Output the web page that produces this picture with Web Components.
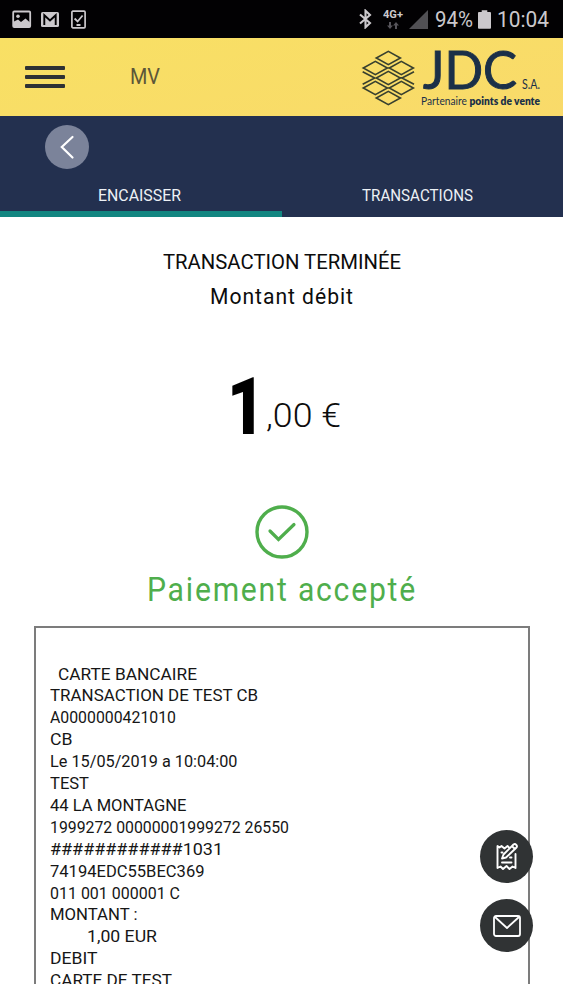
<!DOCTYPE html>
<html lang="fr">
<head>
<meta charset="utf-8">
<title>Transaction</title>
<style>
	html, body {
		margin: 0;
		height: 1000px;
		overflow: hidden;
		background: #fff;
		font-family: Roboto, "Liberation Sans", sans-serif;
	}
</style>
</head>
<body>
<payment-app></payment-app>

<script>
// Line of text squeezed or stretched to a given width
// <fit-text w="120">Hello</fit-text>
class FitText extends HTMLElement {
	constructor() {
		super();
		this.attachShadow({ mode: 'open' });
		this.shadowRoot.innerHTML = `
			<style>
				:host { display: block; flex: none; white-space: nowrap; }
				span { display: inline-block; transform-origin: 0 50%; }
			</style>
			<span><slot></slot></span>`;
	}

	connectedCallback() {
		const w = Number(this.getAttribute('w'));
		const span = this.shadowRoot.querySelector('span');
		this.style.width = w + 'px';
		span.style.transform = `scaleX(${w / span.getBoundingClientRect().width})`;
	}
}

class StatusBar extends HTMLElement {
	constructor() {
		super();
		this.attachShadow({ mode: 'open' });
		this.shadowRoot.innerHTML = `
			<style>
				:host {
					display: flex;
					align-items: center;
					justify-content: space-between;
					box-sizing: border-box;
					height: 37.5px;
					padding: 1px 14px 0 12px;
					background: #020103;
					color: #cbc8cc;
					font-size: 22px;
					line-height: 37px;
				}
				div { display: flex; align-items: center; }
				svg { display: block; flex: none; }
				.net { display: flex; flex-direction: column; align-items: center; margin: 0 6px 0 11px; gap: 2px; }
				.net fit-text { font-size: 10.5px; font-weight: 700; line-height: 10px; }
			</style>
			<div>
				<svg width="20" height="19" viewBox="0 0 20 19">
					<rect x="1.2" y="1.5" width="17" height="15.5" rx="1" fill="none" stroke="#cbc8cc" stroke-width="1.8"/>
					<circle cx="6" cy="6.3" r="1.8" fill="#cbc8cc"/>
					<path d="M2 11.5 6 9.5 9 12 13.5 8.5 18 12.5V17H2Z" fill="#cbc8cc"/>
				</svg>
				<svg width="18" height="15" viewBox="0 0 18 15" style="margin-left:9px">
					<rect width="18" height="15" rx="1.6" fill="#cbc8cc"/>
					<path d="M3.3 13V3.2L9 8.4l5.7-5.2V13" fill="none" stroke="#020103" stroke-width="1.9"/>
				</svg>
				<svg width="15" height="19" viewBox="0 0 15 19" style="margin-left:12px">
					<rect x=".9" y="1.2" width="13.2" height="16.6" rx="1" fill="none" stroke="#cbc8cc" stroke-width="1.7"/>
					<path d="M3.6 8.5 6.6 11.5 11.6 5.5M5.5 15h4" fill="none" stroke="#cbc8cc" stroke-width="1.8"/>
				</svg>
			</div>
			<div>
				<svg width="13" height="20" viewBox="0 0 13 20">
					<path d="M1 5.5 11 14 6.5 18.3V1.7L11 6 1 14.5" fill="none" stroke="#cbc8cc" stroke-width="2.1"/>
				</svg>
				<div class="net">
					<fit-text w="20">4G+</fit-text>
					<svg width="12" height="7" viewBox="0 0 12 7" fill="#56545a">
						<path d="M2 0H4V3.5H6L3 7 0 3.5H2ZM8 7H10V3.5H12L9 0 6 3.5H8Z"/>
					</svg>
				</div>
				<svg width="19" height="19" viewBox="0 0 19 19"><path d="M19 0V19H0Z" fill="#515054"/></svg>
				<fit-text w="38" style="margin-left:7px">94%</fit-text>
				<svg width="13" height="19" viewBox="0 0 14 20" style="margin:0 6px 0 5px">
					<path d="M4 0H10V2H13Q14 2 14 3V19Q14 20 13 20H1Q0 20 0 19V3Q0 2 1 2H4Z" fill="#cbc8cc"/>
				</svg>
				<fit-text w="52">10:04</fit-text>
			</div>`;
	}
}

class JdcLogo extends HTMLElement {
	constructor() {
		super();
		this.attachShadow({ mode: 'open' });
		// Seven diamonds in three columns
		const cells = [[91, 36], [52, 66], [130, 66], [91, 96], [52, 126], [130, 126], [91, 156]];
		const lattice = cells.map(([x, y]) =>
			`M${x - 36} ${y}L${x} ${y - 20}L${x + 36} ${y}L${x} ${y + 20}Z`
		).join('');
		this.shadowRoot.innerHTML = `
			<style>
				:host { display: flex; color: #1b3048; font-family: Lato, sans-serif; }
				svg { display: block; margin-right: 1px; }
				.name { display: flex; align-items: baseline; height: 48px; gap: 5px; }
				.jdc { margin-left: 2px; font-size: 51.5px; line-height: 46px; -webkit-text-stroke: 1px #1b3048; }
				.sa { font-size: 12.5px; }
				.tag { font-size: 11.2px; line-height: 14px; }
				b { font-weight: 800; }
			</style>
			<svg width="62" height="62" viewBox="0 0 186 186">
				<path d="${lattice}M14 77 50 96 14 115M168 77 132 96 168 115" fill="none" stroke="#38402f" stroke-width="5"/>
			</svg>
			<div>
				<div class="name"><fit-text class="jdc" w="94">JDC</fit-text><fit-text class="sa" w="18">S.A.</fit-text></div>
				<fit-text class="tag" w="119">Partenaire <b>points de vente</b></fit-text>
			</div>`;
	}
}

class AppHeader extends HTMLElement {
	constructor() {
		super();
		this.attachShadow({ mode: 'open' });
		this.shadowRoot.innerHTML = `
			<style>
				:host {
					display: flex;
					align-items: center;
					box-sizing: border-box;
					height: 78px;
					padding: 0 23px 0 25px;
					background: linear-gradient(165deg, #f8e064, #f9da6a);
				}
				.menu { display: grid; gap: 5px; width: 40px; margin-right: 65px; }
				.menu i { height: 4px; border-radius: 1px; background: #2d3134; }
				.user { color: #5d5638; font-size: 21.5px; }
				jdc-logo { margin-left: auto; }
			</style>
			<div class="menu"><i></i><i></i><i></i></div>
			<fit-text class="user" w="30">MV</fit-text>
			<jdc-logo></jdc-logo>`;
	}
}

class TabNav extends HTMLElement {
	constructor() {
		super();
		this.attachShadow({ mode: 'open' });
		this.shadowRoot.innerHTML = `
			<style>
				:host {
					display: flex;
					flex-direction: column;
					height: 101.5px;
					background: #23304f;
					color: #edf1f5;
				}
				.back { margin: 9.5px 0 0 45px; width: 44px; height: 44px; }
				.tabs { display: grid; grid-template-columns: 282px 281px; margin-top: auto; font-size: 16.2px; }
				.tab {
					display: flex;
					justify-content: center;
					height: 26px;
					line-height: 21px;
					border-bottom: 6px solid transparent;
				}
				.tab:first-child { border-color: #138681; padding-right: 3px; }
				.tab:last-child { padding-right: 10px; }
			</style>
			<svg class="back" viewBox="0 0 44 44">
				<circle cx="22" cy="22" r="22" fill="#7b839a"/>
				<path d="M27.5 12 16.8 22 27.5 32.5" fill="none" stroke="#fff" stroke-width="2.2" stroke-linecap="round"/>
			</svg>
			<div class="tabs">
				<div class="tab"><fit-text w="83">ENCAISSER</fit-text></div>
				<div class="tab"><fit-text w="111">TRANSACTIONS</fit-text></div>
			</div>`;
	}
}

class PaymentResult extends HTMLElement {
	constructor() {
		super();
		this.attachShadow({ mode: 'open' });
		this.shadowRoot.innerHTML = `
			<style>
				:host { display: flex; flex-direction: column; align-items: center; height: 409px; color: #0c0c0c; }
				.title { margin-top: 29px; font-size: 20.2px; line-height: 32px; }
				.sub { margin-top: 3px; font-size: 21.5px; line-height: 32px; letter-spacing: 1px; }
				.amount { display: flex; height: 90px; margin: 49px 0 0 4px; line-height: 90px; }
				.units { font-size: 79px; font-weight: 900; color: #000; }
				.cents { margin: 18px 0 0 1px; font-size: 33px; font-weight: 300; line-height: 72px; }
				svg { display: block; margin-top: 53px; }
				.state { margin-top: 10px; color: #4fae4c; font-size: 34px; line-height: 40px; letter-spacing: 2px; }
			</style>
			<fit-text class="title" w="238">TRANSACTION TERMINÉE</fit-text>
			<fit-text class="sub" w="144">Montant débit</fit-text>
			<div class="amount"><fit-text class="units" w="38">1</fit-text><fit-text class="cents" w="75">,00 €</fit-text></div>
			<svg width="54" height="54" viewBox="0 0 54 54" fill="none" stroke="#4fae4c">
				<circle cx="27" cy="27" r="25" stroke-width="3.4"/>
				<path d="M15 26 23.5 34.5 39 19.5" stroke-width="3.2" stroke-linecap="round"/>
			</svg>
			<fit-text class="state" w="270">Paiement accepté</fit-text>`;
	}
}

class BankReceipt extends HTMLElement {
	constructor() {
		super();
		this.attachShadow({ mode: 'open' });
		// [text, width, indent]
		const lines = [
			['CARTE BANCAIRE', 139, 8],
			['TRANSACTION DE TEST CB', 208],
			['A0000000421010', 126],
			['CB', 22.5],
			['Le 15/05/2019 a 10:04:00', 187.5],
			['TEST', 39],
			['44 LA MONTAGNE', 136.5],
			['1999272 00000001999272 26550', 239],
			['############1031', 173],
			['74194EDC55BEC369', 154.5],
			['011 001 000001 C', 130],
			['MONTANT :', 87.5],
			['1,00 EUR', 70, 37],
			['DEBIT', 47.5],
			['CARTE DE TEST', 122]
		];
		this.shadowRoot.innerHTML = `
			<style>
				:host {
					display: block;
					box-sizing: border-box;
					width: 496px;
					height: 420px;
					margin-left: 34px;
					padding: 35.6px 0 0 13.8px;
					border: 2px solid #7c7c7c;
					color: #161616;
					font-size: 17.3px;
					line-height: 21.9px;
				}
				fit-text { height: 21.9px; }
			</style>
			${lines.map(([t, w, x = 0]) => `<fit-text w="${w}" style="margin-left:${x}px">${t}</fit-text>`).join('')}`;
	}
}

class RoundButton extends HTMLElement {
	constructor() {
		super();
		this.attachShadow({ mode: 'open' });
		this.shadowRoot.innerHTML = `
			<style>
				:host {
					display: grid;
					place-items: center;
					width: 53px;
					height: 53px;
					border-radius: 50%;
					background: #303334;
				}
			</style>
			<slot></slot>`;
	}
}

class PaymentApp extends HTMLElement {
	constructor() {
		super();
		this.attachShadow({ mode: 'open' });
		this.shadowRoot.innerHTML = `
			<style>
				:host { display: block; position: relative; width: 563px; height: 984px; overflow: hidden; }
				.actions { position: absolute; right: 30px; top: 830px; display: grid; gap: 16px; }
				svg { display: block; }
			</style>
			<status-bar></status-bar>
			<app-header></app-header>
			<tab-nav></tab-nav>
			<payment-result></payment-result>
			<bank-receipt></bank-receipt>
			<div class="actions">
				<round-button>
					<svg width="24" height="30" viewBox="0 0 24 30" fill="none" stroke="#fff" stroke-width="1.9" stroke-linejoin="round" stroke-linecap="round">
						<path d="M14 5.5 12.5 4 9.5 6.5 6.5 4 4.5 5.5 2.5 4V26L5.5 24.5 8 27 11.5 24 14.5 27 17.5 24.5 20.5 26V12"/>
						<path d="M7 16.5 8.5 12.5 18.5 2.5Q20 1.5 21.3 2.8 22.5 4.2 21.5 5.5L11 15.5ZM17 4.3 20 7M6.5 10.5H7.5M15 15.5H16.5M7 20.5H16.5"/>
					</svg>
				</round-button>
				<round-button>
					<svg width="28" height="22" viewBox="0 0 28 22" fill="none" stroke="#fff" stroke-width="1.8" stroke-linejoin="round">
						<rect x="1" y="1" width="26" height="20" rx="2"/>
						<path d="M2 2 14 13 26 2"/>
					</svg>
				</round-button>
			</div>`;
	}
}

customElements.define('fit-text', FitText);
customElements.define('status-bar', StatusBar);
customElements.define('jdc-logo', JdcLogo);
customElements.define('app-header', AppHeader);
customElements.define('tab-nav', TabNav);
customElements.define('payment-result', PaymentResult);
customElements.define('bank-receipt', BankReceipt);
customElements.define('round-button', RoundButton);
customElements.define('payment-app', PaymentApp);
</script>
</body>
</html>
